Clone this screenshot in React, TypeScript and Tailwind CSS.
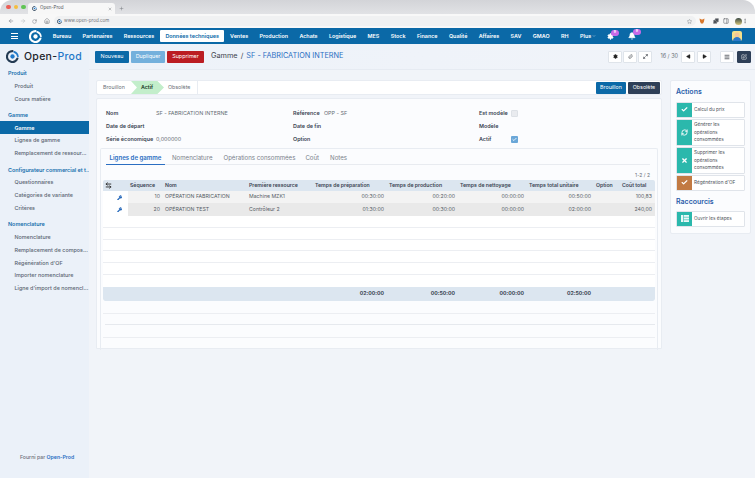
import { ArrowLeft, ArrowLeftRight, ArrowRight, Check, ChevronDown, Maximize2, Home, Menu, MoreVertical, Paperclip, Plus, Puzzle, RefreshCw, RotateCw, Settings, SquarePen, Star, Wrench, X, Bell, PanelRight, Play } from 'lucide-react'
import type { ReactNode } from 'react'

const navItems = ['Bureau', 'Partenaires', 'Ressources', 'Données techniques', 'Ventes', 'Production', 'Achats', 'Logistique', 'MES', 'Stock', 'Finance', 'Qualité', 'Affaires', 'SAV', 'GMAO', 'RH']

const sidebar = [
  { title: 'Produit', items: ['Produit', 'Cours matière'] },
  { title: 'Gamme', items: ['Gamme', 'Lignes de gamme', 'Remplacement de ressour...'] },
  { title: 'Configurateur commercial et t...', items: ['Questionnaires', 'Catégories de variante', 'Critères'] },
  { title: 'Nomenclature', items: ['Nomenclature', 'Remplacement de compos...', "Régénération d'OF", 'Importer nomenclature', "Ligne d'import de nomencl..."] },
]

const columns = ['Séquence', 'Nom', 'Première ressource', 'Temps de préparation', 'Temps de production', 'Temps de nettoyage', 'Temps total unitaire', 'Option', 'Coût total']

const rows = [
  { seq: '10', nom: 'OPÉRATION FABRICATION', res: 'Machine MZK1', prep: '00:30:00', prod: '00:20:00', net: '00:00:00', total: '00:50:00', cout: '100,83', bg: 'bg-[#f3f3f3]' },
  { seq: '20', nom: 'OPÉRATION TEST', res: 'Contrôleur 2', prep: '01:30:00', prod: '00:30:00', net: '00:00:00', total: '02:00:00', cout: '240,00', bg: 'bg-[#e9e9e9]' },
]

const gridCols = 'grid grid-cols-[25px_35px_84px_66px_74px_71px_69px_67px_26px_36px]'

function Logo({ size, dark }: { size: number; dark?: boolean }) {
  return (
    <svg width={size} height={size} viewBox="0 0 24 24" fill="none">
      <path d="M12 2a10 10 0 1 0 9 14" stroke={dark ? '#243b53' : '#ffffff'} strokeWidth="4" strokeLinecap="round" />
      <path d="M15 3.5A10 10 0 0 1 22 12" stroke={dark ? '#1f78c8' : '#ffffff'} strokeWidth="3" strokeLinecap="round" />
      <circle cx="12" cy="12" r="4" fill={dark ? '#1f78c8' : '#ffffff'} />
    </svg>
  )
}

function ToolButton({ children, dark }: { children: ReactNode; dark?: boolean }) {
  return (
    <div className={`flex h-[12px] w-[14px] items-center justify-center rounded-[1px] border ${dark ? 'border-[#2e3f57] bg-[#2e3f57] text-white' : 'border-[#dfe4ea] bg-white text-[#3a3f47]'}`}>
      {children}
    </div>
  )
}

function Field({ label, value, labelWidth }: { label: string; value?: string; labelWidth: string }) {
  return (
    <div className="flex h-[13.2px] items-center">
      <span className={`${labelWidth} font-semibold text-[#3a4452]`}>{label}</span>
      {value && <span className="text-[#666c75]">{value}</span>}
    </div>
  )
}

function ActionButton({ icon, label, color, tall }: { icon: ReactNode; label: ReactNode; color: string; tall?: boolean }) {
  return (
    <div className={`flex ${tall ? 'h-[26.5px]' : 'h-[15.5px]'} items-stretch rounded-[1px] border border-[#e0e4ea] bg-white`}>
      <div className={`flex w-[15px] shrink-0 items-center justify-center text-white ${color}`}>{icon}</div>
      <div className="flex items-center pl-[2px] text-[4.7px] leading-[7.4px] text-[#4a4f57]">{label}</div>
    </div>
  )
}

export default function App() {
  return (
    <div className="flex h-[478px] w-[755px] flex-col overflow-hidden bg-white [font-family:Inter,sans-serif]">
      {/* browser chrome */}
      <div className="overflow-hidden rounded-t-[12px]">
        <div className="flex h-[14px] items-end bg-gradient-to-b from-[#d3d4d8] to-[#e1e2e5] pl-[6px]">
          <div className="flex gap-[3px] self-center">
            <span className="h-[4.5px] w-[4.5px] rounded-full bg-[#ec5f57]" />
            <span className="h-[4.5px] w-[4.5px] rounded-full bg-[#f4bd3f]" />
            <span className="h-[4.5px] w-[4.5px] rounded-full bg-[#5fc454]" />
          </div>
          <div className="ml-[2.5px] flex h-[11px] w-[87px] items-center rounded-t-[3px] bg-[#f7f7f7] pl-[4px] pr-[3px] text-[4.5px] text-[#50545a]">
            <Logo size={5} dark />
            <span className="ml-[3px]">Open-Prod</span>
            <X className="ml-auto h-[4px] w-[4px]" />
          </div>
          <Plus className="mb-[3px] ml-[4px] h-[5px] w-[5px] text-[#6b6f75]" />
        </div>
        <div className="flex h-[14px] items-center bg-[#f8f8f8] pl-[8px] pr-[3px] text-[#6a6e74]">
          <ArrowLeft className="h-[6px] w-[6px]" />
          <ArrowRight className="ml-[6px] h-[6px] w-[6px] text-[#b5b8bc]" />
          <RotateCw className="ml-[6px] h-[5px] w-[5px]" />
          <Home className="ml-[7px] h-[6px] w-[6px]" />
          <div className="ml-[4px] flex h-[10px] w-[642px] shrink-0 items-center rounded-full bg-[#f0f1f2] pl-[3px] text-[4.5px] text-[#70747a]">
            <Logo size={5} dark />
            <span className="ml-[2px]">www.open-prod.com</span>
            <Star className="ml-auto mr-[4px] h-[5px] w-[5px]" />
          </div>
          <svg className="ml-[3px] h-[6px] w-[6px]" viewBox="0 0 12 12"><path d="M1 1l4 2h2l4-2-1 6-2 4H4L2 7z" fill="#d9772b" /></svg>
          <Puzzle className="ml-[8px] h-[6px] w-[6px] shrink-0 fill-[#50545a] text-[#50545a]" />
          <PanelRight className="ml-[4px] h-[6px] w-[6px] shrink-0 text-[#50545a]" />
          <div className="ml-[6px] h-[7px] w-[7px] shrink-0 rounded-full bg-gradient-to-b from-[#3b4a44] to-[#d9c77a]" />
          <MoreVertical className="h-[6px] w-[6px] shrink-0" />
        </div>
      </div>

      {/* main nav */}
      <div className="flex h-[16px] shrink-0 items-center bg-[#0b69a7] text-[5.4px] font-semibold text-white">
        <div className="ml-[11px] flex h-[6px] w-[7px] flex-col justify-between">
          <span className="h-[1px] bg-white" />
          <span className="h-[1px] bg-white" />
          <span className="h-[1px] bg-white" />
        </div>
        <div className="ml-[11px] mr-[5px]"><Logo size={13} /></div>
        {navItems.map(item => (
          <div key={item} className={item === 'Données techniques' ? 'flex h-[12px] items-center rounded-[1px] bg-white px-[5.5px] text-[#0b69a7]' : 'px-[5.7px]'}>
            {item}
          </div>
        ))}
        <div className="flex items-center px-[5.7px]">Plus<ChevronDown className="ml-[1px] h-[4px] w-[4px]" /></div>
        <div className="relative ml-[5px]">
          <Settings className="h-[7px] w-[7px] fill-white" />
          <span className="absolute -top-[3px] left-[4px] flex h-[6px] w-[8px] items-center justify-center rounded-full bg-[#c86ae8] text-[3.5px]">9</span>
        </div>
        <div className="relative ml-[14px]">
          <Bell className="h-[8px] w-[8px] fill-white" />
          <span className="absolute -top-[3px] left-[5px] flex h-[6px] w-[8px] items-center justify-center rounded-full bg-[#c86ae8] text-[3.5px]">9</span>
        </div>
        <svg className="ml-auto mr-[13px] h-[10px] w-[10px]" viewBox="0 0 20 20">
          <rect width="20" height="20" rx="4" fill="#f6e08a" />
          <circle cx="10" cy="8" r="5" fill="#f2c79a" />
          <path d="M2 20c0-6 4-8 8-8s8 2 8 8z" fill="#2c78c9" />
        </svg>
      </div>

      {/* body */}
      <div className="flex min-h-0 flex-1">
        <aside className="flex w-[89px] shrink-0 flex-col bg-[#ebf1f9] text-[5.4px] font-medium text-[#5a6472]">
          <div className="flex h-[22.6px] shrink-0 items-start pl-[6px] pt-[6px]">
            <Logo size={13} dark />
            <span className="ml-[5px] whitespace-nowrap text-[10.5px] leading-[13px] tracking-[0.3px] text-[#20242b]">Open-<span className="text-[#1f78c8]">Prod</span></span>
          </div>
          {sidebar.map(section => (
            <div key={section.title} className="mb-[3.5px]">
              <div className="flex h-[12.8px] items-center whitespace-nowrap pl-[8px] font-semibold text-[#1770ad]">{section.title}</div>
              {section.items.map(item => (
                <div key={item} className={`flex h-[12.8px] items-center whitespace-nowrap pl-[14.5px] ${section.title === 'Gamme' && item === 'Gamme' ? 'bg-[#0b69a7] font-semibold text-white' : ''}`}>
                  {item}
                </div>
              ))}
            </div>
          ))}
          <div className="mt-auto pb-[16px] pl-[20px] text-[5.2px] text-[#6b7078]">
            Fourni par <span className="font-semibold text-[#2a6ec2]">Open-Prod</span>
          </div>
        </aside>

        <div className="flex min-w-0 flex-1 flex-col bg-[#f1f4f9]">
          {/* header */}
          <div className="flex h-[26px] shrink-0 items-center border-b border-[#e6ebf2] bg-gradient-to-r from-[#edf2f9] to-[#f1f4f9] pl-[6px] pr-[4px]">
            <div className="flex gap-[2px] text-[5.4px] text-white">
              <div className="flex h-[12px] w-[34px] items-center justify-center rounded-[1px] bg-[#0b69a7]">Nouveau</div>
              <div className="flex h-[12px] w-[34px] items-center justify-center rounded-[1px] bg-[#74b0dc]">Dupliquer</div>
              <div className="flex h-[12px] w-[37px] items-center justify-center rounded-[1px] bg-[#bb1d22]">Supprimer</div>
            </div>
            <div className="ml-[7px] whitespace-nowrap text-[7.3px] text-[#3d434c]">
              Gamme <span className="mx-[1px]">/</span> <span className="text-[#2a6ec2]">SF - FABRICATION INTERNE</span>
            </div>
            <div className="ml-auto flex items-center">
              <div className="flex gap-[1px]">
                <ToolButton><Settings className="h-[5px] w-[5px] fill-[#222] text-[#222]" /></ToolButton>
                <ToolButton><Paperclip className="h-[5px] w-[5px]" /></ToolButton>
                <ToolButton><Maximize2 className="h-[5px] w-[5px]" strokeWidth={3} /></ToolButton>
              </div>
              <span className="ml-[8px] mr-[3px] text-[5.5px] text-[#6b7078]">16 / 30</span>
              <div className="flex gap-[2px]">
                <ToolButton><Play className="h-[5px] w-[5px] rotate-180 fill-[#222] text-[#222]" /></ToolButton>
                <ToolButton><Play className="h-[5px] w-[5px] fill-[#222] text-[#222]" /></ToolButton>
              </div>
              <div className="ml-[9px] flex gap-[3px]">
                <ToolButton><Menu className="h-[6px] w-[6px]" strokeWidth={3} /></ToolButton>
                <ToolButton dark><SquarePen className="h-[6px] w-[6px]" /></ToolButton>
              </div>
            </div>
          </div>

          <main className="flex flex-1 gap-[8px] pl-[7px] pr-[4px] pt-[10px]">
            <div className="w-[566px]">
              {/* status bar */}
              <div className="flex h-[15px] items-center rounded-[2px] border border-[#e8ecf2] bg-white pr-[1px] text-[5.3px] text-[#6b7078]">
                <div className="flex h-full w-[34px] items-center pl-[6px]">Brouillon</div>
                <div className="flex h-full w-[33px] items-center bg-[#c3eecb] pl-[10px] font-semibold text-[#1c3a28] [clip-path:polygon(0_0,80%_0,100%_50%,80%_100%,0_100%,18%_50%)]">Actif</div>
                <div className="flex h-full w-[34px] items-center border-r border-[#e8ecf2] pl-[4px]">Obsolète</div>
                <div className="ml-auto flex gap-[2px] text-white">
                  <div className="flex h-[12px] w-[30px] items-center justify-center rounded-[1px] bg-[#0b69a7]">Brouillon</div>
                  <div className="flex h-[12px] w-[32px] items-center justify-center rounded-[1px] bg-[#2e3f57]">Obsolète</div>
                </div>
              </div>

              {/* form */}
              <div className="mt-[3px] h-[251px] rounded-t-[2px] border border-[#e8ecf2] bg-[#fbfcfe] px-[3px] pt-[7.5px] text-[5.4px]">
                <div className="flex pl-[6px]">
                  <div className="w-[187px]">
                    <Field label="Nom" value="SF - FABRICATION INTERNE" labelWidth="w-[50px]" />
                    <Field label="Date de départ" labelWidth="w-[50px]" />
                    <Field label="Série économique" value="0,000000" labelWidth="w-[50px]" />
                  </div>
                  <div className="w-[186px]">
                    <Field label="Référence" value="OPP - SF" labelWidth="w-[31px]" />
                    <Field label="Date de fin" labelWidth="w-[31px]" />
                    <Field label="Option" labelWidth="w-[31px]" />
                  </div>
                  <div>
                    <div className="flex h-[13.2px] items-center">
                      <span className="w-[32px] font-semibold text-[#3a4452]">Est modèle</span>
                      <span className="h-[7px] w-[7px] rounded-[1px] border border-[#dde1e6] bg-[#e9ebef]" />
                    </div>
                    <Field label="Modèle" labelWidth="w-[32px]" />
                    <div className="flex h-[13.2px] items-center">
                      <span className="w-[32px] font-semibold text-[#3a4452]">Actif</span>
                      <span className="flex h-[7px] w-[7px] items-center justify-center rounded-[1px] bg-[#6aa7d8] text-white"><Check className="h-[5px] w-[5px]" strokeWidth={4} /></span>
                    </div>
                  </div>
                </div>

                {/* tabs card */}
                <div className="mt-[2px] h-[202px] rounded-t-[2px] border-x border-t border-[#e8ecf2] px-[2px] pt-[3px]">
                  <div className="ml-[3px] mr-[5px] flex h-[13px] items-start border-b border-[#e8ebf0] text-[6.1px] text-[#7a818b]">
                    <div className="flex h-[13px] w-[59px] justify-center border-b border-[#2a6ec2] pt-[1px] font-semibold text-[#2a6ec2]">Lignes de gamme</div>
                    <div className="ml-[7px] pt-[1px]">Nomenclature</div>
                    <div className="ml-[11px] pt-[1px]">Opérations consommées</div>
                    <div className="ml-[10px] pt-[1px]">Coût</div>
                    <div className="ml-[11px] pt-[1px]">Notes</div>
                  </div>
                  <div className="flex h-[15px] items-end justify-end pb-[0.5px] pr-[5px] text-[5px] text-[#6b7078]">1-2 / 2</div>

                  {/* table */}
                  <div className="overflow-hidden rounded-[2px] bg-white">
                    <div className={`${gridCols} h-[11px] items-center bg-[#dce6f0] text-[5.2px] font-semibold text-[#3a4452]`}>
                      <div className="pl-[2px]"><ArrowLeftRight className="h-[7px] w-[7px] text-[#222]" strokeWidth={3} /></div>
                      {columns.map(col => (
                        <div key={col} className="whitespace-nowrap pl-[2px]">{col}</div>
                      ))}
                    </div>
                    {rows.map(row => (
                      <div key={row.seq} className={`${gridCols} h-[12.4px] items-center text-[5.2px] text-[#565c65]`}>
                        <div className="flex h-full items-center justify-center bg-white pl-[8px] text-[#1c62b8]"><Wrench className="h-[5.5px] w-[5.5px] fill-[#1c62b8]" /></div>
                        <div className={`flex h-full items-center justify-end pr-[3px] ${row.bg}`}>{row.seq}</div>
                        <div className={`flex h-full items-center whitespace-nowrap pl-[2px] ${row.bg}`}>{row.nom}</div>
                        <div className={`flex h-full items-center pl-[2px] ${row.bg}`}>{row.res}</div>
                        <div className={`flex h-full items-center justify-end pr-[3px] ${row.bg}`}>{row.prep}</div>
                        <div className={`flex h-full items-center justify-end pr-[3px] ${row.bg}`}>{row.prod}</div>
                        <div className={`flex h-full items-center justify-end pr-[3px] ${row.bg}`}>{row.net}</div>
                        <div className={`flex h-full items-center justify-end pr-[3px] ${row.bg}`}>{row.total}</div>
                        <div className={`h-full ${row.bg}`} />
                        <div className={`flex h-full items-center justify-end pr-[4px] ${row.bg}`}>{row.cout}</div>
                      </div>
                    ))}
                    <div className="h-[12px] border-b border-[#eceef2]" />
                    <div className="h-[11.8px] border-b border-[#eceef2]" />
                    <div className="h-[11.8px] border-b border-[#eceef2]" />
                    <div className="h-[11.8px] border-b border-[#eceef2]" />
                    <div className="h-[12px] border-b border-[#eceef2]" />
                    <div className="h-[12px]" />
                    <div className={`${gridCols} h-[14px] items-center rounded-b-[2px] bg-[#dce6f0] text-[5.2px] font-bold text-[#3a4452]`}>
                      <div className="col-start-5 pr-[3px] text-right">02:00:00</div>
                      <div className="pr-[3px] text-right">00:50:00</div>
                      <div className="pr-[3px] text-right">00:00:00</div>
                      <div className="pr-[3px] text-right">02:50:00</div>
                    </div>
                  </div>
                  <div className="h-[13px] border-b border-[#eceef2]" />
                  <div className="ml-[2px] h-[11px] border-b border-[#e6e9ee]" />
                  <div className="h-[13px] border-b border-[#eceef2]" />
                </div>
              </div>
            </div>

            {/* actions panel */}
            <div className="h-[154px] w-[81px] rounded-[2px] border border-[#e8ecf2] bg-[#fbfcfe] px-[5px] pt-[6px]">
              <div className="text-[7px] font-semibold leading-[10px] text-[#2a5caa]">Actions</div>
              <div className="mt-[5px] flex flex-col gap-[1.5px]">
                <ActionButton color="bg-[#2bb8ac]" icon={<Check className="h-[7px] w-[7px]" strokeWidth={4} />} label="Calcul du prix" />
                <ActionButton tall color="bg-[#2bb8ac]" icon={<RefreshCw className="h-[7px] w-[7px]" strokeWidth={3} />} label={<span>Générer les<br />opérations<br />consommées</span>} />
                <ActionButton tall color="bg-[#2bb8ac]" icon={<X className="h-[7px] w-[7px]" strokeWidth={4} />} label={<span>Supprimer les<br />opérations<br />consommées</span>} />
                <ActionButton color="bg-[#c27a43]" icon={<Check className="h-[7px] w-[7px]" strokeWidth={4} />} label="Régénération d'OF" />
              </div>
              <div className="mt-[6px] text-[7px] font-semibold leading-[10px] text-[#2a5caa]">Raccourcis</div>
              <div className="mt-[4.5px]">
                <ActionButton
                  color="bg-[#2bb8ac]"
                  icon={
                    <svg className="h-[7px] w-[8px]" viewBox="0 0 16 14">
                      <rect width="16" height="14" fill="#ffffff" opacity="0.9" />
                      <path d="M5 0v14M5 4.5h11M5 9.5h11" stroke="#2bb8ac" strokeWidth="1.2" />
                    </svg>
                  }
                  label="Ouvrir les étapes"
                />
              </div>
            </div>
          </main>
        </div>
      </div>
    </div>
  )
}
